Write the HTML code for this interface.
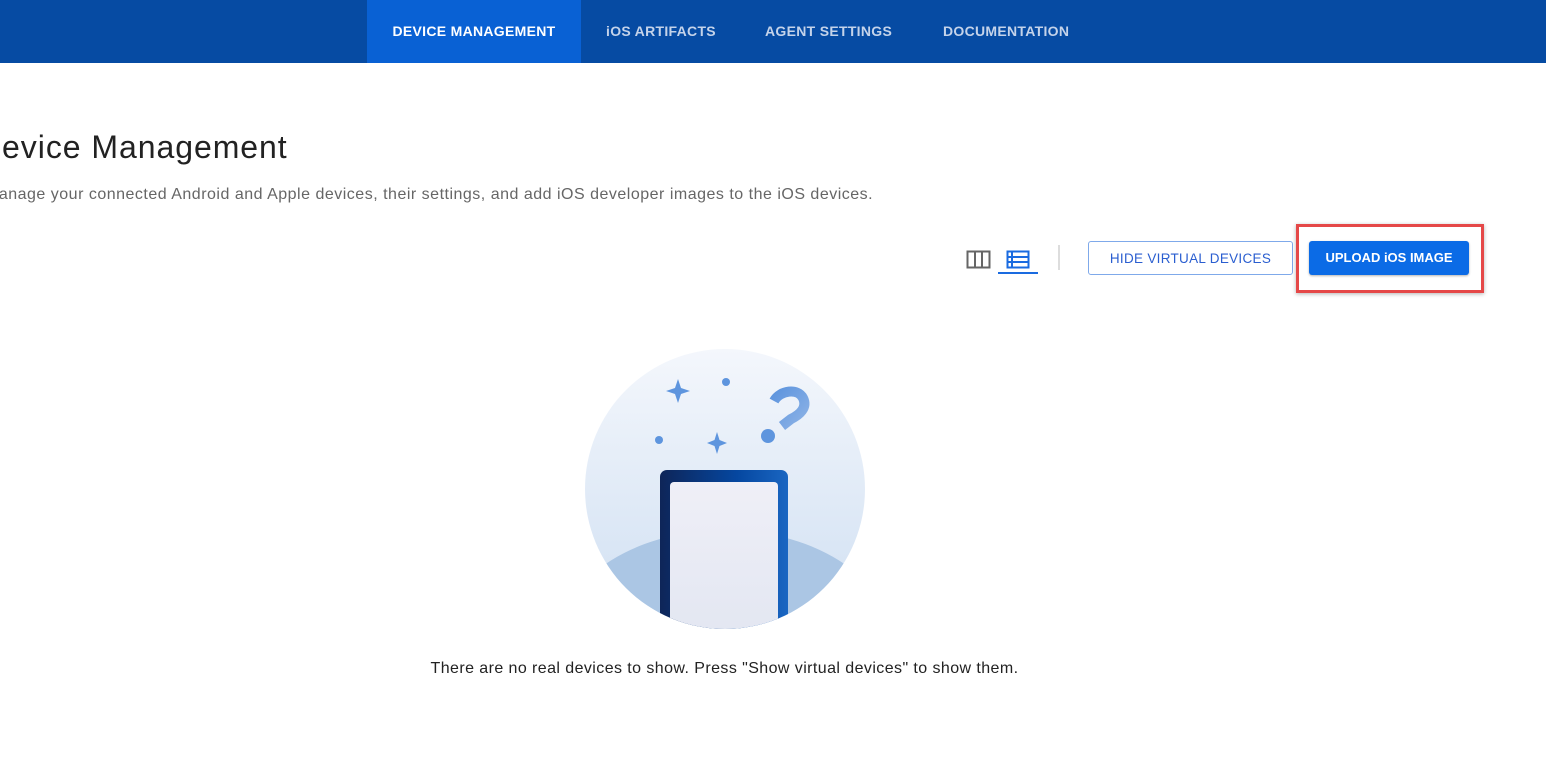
<!DOCTYPE html>
<html><head><meta charset="utf-8"><style>
*{margin:0;padding:0;box-sizing:border-box}
body{width:1546px;height:770px;overflow:hidden;background:#fff;font-family:"Liberation Sans",sans-serif;position:relative}
.nav{position:absolute;left:0;top:0;width:1546px;height:63px;background:#064ba3}
.tab{position:absolute;top:0;height:63px;line-height:62px;font-size:14px;font-weight:bold;color:#c4d3ea;letter-spacing:.3px}
.act{background:#0961d4;color:#fff;left:367px;width:214px;text-align:center}
h1{position:absolute;left:-22px;top:129px;font-size:32px;font-weight:normal;color:#222;letter-spacing:.95px;white-space:nowrap}
.sub{position:absolute;left:-15px;top:186px;font-size:16px;color:#666;letter-spacing:.5px;white-space:nowrap}
.btn{position:absolute;top:241px;height:34px;border-radius:3px;font-size:13px;text-align:center;line-height:34px;letter-spacing:.3px}
.b1{left:1088px;width:205px;border:1px solid #7fa9ea;color:#2a5ed0;font-size:13.5px}
.b2{left:1309px;width:160px;background:#0b6be6;color:#fff;font-weight:bold;box-shadow:0 1px 2px rgba(0,0,0,.3);letter-spacing:0}
.red{position:absolute;left:1296px;top:224px;width:188px;height:69px;border:3px solid #e54848;box-shadow:0 1px 4px rgba(0,0,0,.3)}
.msg{position:absolute;left:0;width:1449px;top:660px;text-align:center;font-size:16px;color:#222;letter-spacing:.42px}
</style></head><body>
<div class="nav">
<div class="tab act">DEVICE MANAGEMENT</div>
<div class="tab" style="left:606px">iOS ARTIFACTS</div>
<div class="tab" style="left:765px">AGENT SETTINGS</div>
<div class="tab" style="left:943px">DOCUMENTATION</div>
</div>
<h1>Device Management</h1>
<div class="sub">Manage your connected Android and Apple devices, their settings, and add iOS developer images to the iOS devices.</div>
<svg style="position:absolute;left:960px;top:245px" width="120" height="32">
<rect x="7.5" y="6.5" width="22" height="16" fill="none" stroke="#666" stroke-width="2"/>
<line x1="15" y1="6" x2="15" y2="23" stroke="#666" stroke-width="2"/><line x1="22" y1="6" x2="22" y2="23" stroke="#666" stroke-width="2"/>
<rect x="47.5" y="6.5" width="21" height="16" fill="none" stroke="#1a6be0" stroke-width="2"/>
<line x1="47" y1="12" x2="69" y2="12" stroke="#1a6be0" stroke-width="2"/><line x1="47" y1="17" x2="69" y2="17" stroke="#1a6be0" stroke-width="2"/>
<line x1="52" y1="6" x2="52" y2="23" stroke="#1a6be0" stroke-width="2"/>
<rect x="38" y="27" width="40" height="2" fill="#1a6be0"/>
<rect x="98" y="0" width="2" height="25" fill="#ddd"/>
</svg>
<div class="btn b1">HIDE VIRTUAL DEVICES</div>
<div class="red"></div>
<div class="btn b2">UPLOAD iOS IMAGE</div>
<svg style="position:absolute;left:584px;top:348px" width="282" height="282" viewBox="0 0 282 282">
<defs>
<linearGradient id="bg" x1="0" y1="0" x2="0" y2="1"><stop offset="0" stop-color="#f4f7fc"/><stop offset="1" stop-color="#cfdff2"/></linearGradient>
<linearGradient id="ph" x1="0" y1="0" x2="1" y2="0"><stop offset="0" stop-color="#0e2558"/><stop offset=".6" stop-color="#0547a0"/><stop offset="1" stop-color="#1a66c2"/></linearGradient>
<linearGradient id="sc" x1="0" y1="0" x2="0" y2="1"><stop offset="0" stop-color="#efeff7"/><stop offset="1" stop-color="#dfe4f0"/></linearGradient>
<linearGradient id="q" x1="0" y1="0" x2="1" y2="1"><stop offset="0" stop-color="#5e95de"/><stop offset="1" stop-color="#8cb2e6"/></linearGradient>
<clipPath id="c"><circle cx="141" cy="141" r="140"/></clipPath>
</defs>
<g clip-path="url(#c)">
<rect width="282" height="282" fill="url(#bg)"/>
<ellipse cx="141" cy="300" rx="170" ry="118" fill="#abc6e4"/>
<rect x="76" y="122" width="128" height="200" rx="7" fill="url(#ph)"/>
<rect x="86" y="134" width="108" height="200" rx="4" fill="url(#sc)"/>
</g>
<g fill="#5e95de">
<path d="M94 31 L97 40 L106 43 L97 46 L94 55 L91 46 L82 43 L91 40Z"/>
<path d="M133 84 L135.5 92 L143 95 L135.5 98 L133 106 L130.5 98 L123 95 L130.5 92Z"/>
<circle cx="142" cy="34" r="4"/><circle cx="75" cy="92" r="4"/>
<circle cx="184" cy="88" r="7"/>
</g>
<path d="M190 53 C196 42 214 40 219 50 C224 60 215 67 207 71 L198 78" fill="none" stroke="url(#q)" stroke-width="10" stroke-linejoin="round"/>
</svg>
<div class="msg">There are no real devices to show. Press "Show virtual devices" to show them.</div>
</body></html>
